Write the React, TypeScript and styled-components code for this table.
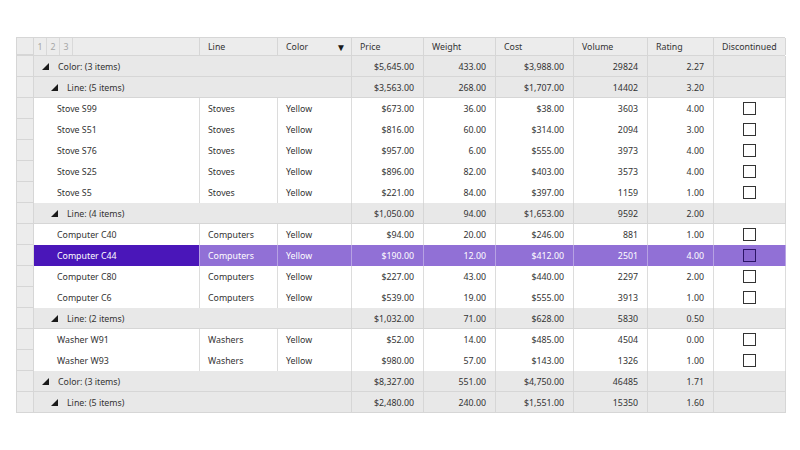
import React from "react";
import styled, { createGlobalStyle } from "styled-components";

type Item = {
  name: string;
  line: string;
  price: string;
  weight: string;
  cost: string;
  volume: string;
  rating: string;
  selected?: boolean;
};

type Agg = {
  price: string;
  weight: string;
  cost: string;
  volume: string;
  rating: string;
};

type Row =
  | { kind: "group"; level: 1 | 2; label: string; agg: Agg }
  | { kind: "item"; item: Item };

const agg = (price: string, weight: string, cost: string, volume: string, rating: string): Agg => ({
  price,
  weight,
  cost,
  volume,
  rating,
});

const item = (
  name: string,
  line: string,
  price: string,
  weight: string,
  cost: string,
  volume: string,
  rating: string,
  selected = false
): Row => ({ kind: "item", item: { name, line, price, weight, cost, volume, rating, selected } });

const rows: Row[] = [
  { kind: "group", level: 1, label: "Color: (3 items)", agg: agg("$5,645.00", "433.00", "$3,988.00", "29824", "2.27") },
  { kind: "group", level: 2, label: "Line: (5 items)", agg: agg("$3,563.00", "268.00", "$1,707.00", "14402", "3.20") },
  item("Stove S99", "Stoves", "$673.00", "36.00", "$38.00", "3603", "4.00"),
  item("Stove S51", "Stoves", "$816.00", "60.00", "$314.00", "2094", "3.00"),
  item("Stove S76", "Stoves", "$957.00", "6.00", "$555.00", "3973", "4.00"),
  item("Stove S25", "Stoves", "$896.00", "82.00", "$403.00", "3573", "4.00"),
  item("Stove S5", "Stoves", "$221.00", "84.00", "$397.00", "1159", "1.00"),
  { kind: "group", level: 2, label: "Line: (4 items)", agg: agg("$1,050.00", "94.00", "$1,653.00", "9592", "2.00") },
  item("Computer C40", "Computers", "$94.00", "20.00", "$246.00", "881", "1.00"),
  item("Computer C44", "Computers", "$190.00", "12.00", "$412.00", "2501", "4.00", true),
  item("Computer C80", "Computers", "$227.00", "43.00", "$440.00", "2297", "2.00"),
  item("Computer C6", "Computers", "$539.00", "19.00", "$555.00", "3913", "1.00"),
  { kind: "group", level: 2, label: "Line: (2 items)", agg: agg("$1,032.00", "71.00", "$628.00", "5830", "0.50") },
  item("Washer W91", "Washers", "$52.00", "14.00", "$485.00", "4504", "0.00"),
  item("Washer W93", "Washers", "$980.00", "57.00", "$143.00", "1326", "1.00"),
  { kind: "group", level: 1, label: "Color: (3 items)", agg: agg("$8,327.00", "551.00", "$4,750.00", "46485", "1.71") },
  { kind: "group", level: 2, label: "Line: (5 items)", agg: agg("$2,480.00", "240.00", "$1,551.00", "15350", "1.60") },
];

const GlobalStyle = createGlobalStyle`
  html, body {
    margin: 0;
    padding: 0;
    background: #ffffff;
  }
  body {
    font-family: "Noto Sans", "Open Sans", sans-serif;
    font-size: 8.8px;
    color: #333333;
  }
`;

const COLUMNS = "17px 166px 78px 74px 72px 72px 78px 74px 66px 72px";

const Page = styled.div`
  width: 800px;
  height: 450px;
  padding: 37px 0 0 16px;
  box-sizing: border-box;
`;

const Grid = styled.div`
  width: 769px;
  border-left: 1px solid #d6d6d6;
  border-top: 1px solid #d6d6d6;
  box-sizing: border-box;
`;

const HeaderRow = styled.div`
  display: grid;
  grid-template-columns: ${COLUMNS};
  height: 17px;
  background: #ececec;
  border-bottom: 1px solid #d6d6d6;
`;

const HeaderCell = styled.div`
  display: flex;
  align-items: center;
  justify-content: space-between;
  padding: 0 5px 0 8px;
  border-right: 1px solid #d6d6d6;
  box-sizing: border-box;
  white-space: nowrap;
`;

const GroupLevels = styled.div`
  display: flex;
  height: 100%;
`;

const LevelBox = styled.div`
  width: 13px;
  display: flex;
  align-items: center;
  justify-content: center;
  color: #a6a6a6;
  border-right: 1px solid #d9d9d9;
  box-sizing: border-box;
`;

const NameHeader = styled.div`
  border-right: 1px solid #d6d6d6;
`;

const SortGlyph = styled.span`
  font-size: 10px;
  color: #1a1a1a;
`;

const BodyRow = styled.div<{ $group?: boolean }>`
  display: grid;
  grid-template-columns: ${COLUMNS};
  height: 21px;
  background: ${(p) => (p.$group ? "#e8e8e8" : "#ffffff")};
  box-shadow: ${(p) => (p.$group ? "inset 0 -1px 0 #d6d6d6" : "none")};
`;

const RowHeader = styled.div`
  background: #ececec;
  border-right: 1px solid #d6d6d6;
  border-bottom: 1px solid #d6d6d6;
  box-sizing: border-box;
`;

const GroupLabel = styled.div<{ $level: number }>`
  grid-column: span 3;
  display: flex;
  align-items: center;
  gap: 9px;
  padding-left: ${(p) => (p.$level === 1 ? 8 : 17)}px;
  border-right: 1px solid #d6d6d6;
  box-sizing: border-box;
  white-space: nowrap;
`;

const Cell = styled.div<{ $align?: "left" | "right" | "center"; $tone?: "dark" | "light" }>`
  display: flex;
  align-items: center;
  justify-content: ${(p) =>
    p.$align === "right" ? "flex-end" : p.$align === "center" ? "center" : "flex-start"};
  padding: 0 ${(p) => (p.$align === "right" ? 9 : 8)}px;
  border-right: 1px solid ${(p) => (p.$tone ? "#b7a2e3" : "#dcdcdc")};
  box-sizing: border-box;
  white-space: nowrap;
  background: ${(p) => (p.$tone === "dark" ? "#4a16b9" : p.$tone === "light" ? "#9170d6" : "transparent")};
  color: ${(p) => (p.$tone ? "#ffffff" : "inherit")};
`;

const NameCell = styled(Cell)`
  padding-left: 23px;
`;

const AggCell = styled(Cell)`
  border-right-color: #d6d6d6;
`;

const CheckBox = styled.span<{ $selected?: boolean }>`
  width: 11px;
  height: 11px;
  border: 1px solid ${(p) => (p.$selected ? "#2c1466" : "#333333")};
  background: ${(p) => (p.$selected ? "#8a66d0" : "#ffffff")};
`;

function Expander() {
  return (
    <svg width="7" height="7" viewBox="0 0 7 7">
      <polygon points="7,0 7,7 0,7" fill="#1a1a1a" />
    </svg>
  );
}

function GroupRow({ level, label, agg }: { level: number; label: string; agg: Agg }) {
  return (
    <BodyRow $group>
      <RowHeader />
      <GroupLabel $level={level}>
        <Expander />
        {label}
      </GroupLabel>
      <AggCell $align="right">{agg.price}</AggCell>
      <AggCell $align="right">{agg.weight}</AggCell>
      <AggCell $align="right">{agg.cost}</AggCell>
      <AggCell $align="right">{agg.volume}</AggCell>
      <AggCell $align="right">{agg.rating}</AggCell>
      <AggCell />
    </BodyRow>
  );
}

function ItemRow({ item }: { item: Item }) {
  const tone = item.selected ? "light" : undefined;
  return (
    <BodyRow>
      <RowHeader />
      <NameCell $tone={item.selected ? "dark" : undefined}>{item.name}</NameCell>
      <Cell $tone={tone}>{item.line}</Cell>
      <Cell $tone={tone}>Yellow</Cell>
      <Cell $align="right" $tone={tone}>{item.price}</Cell>
      <Cell $align="right" $tone={tone}>{item.weight}</Cell>
      <Cell $align="right" $tone={tone}>{item.cost}</Cell>
      <Cell $align="right" $tone={tone}>{item.volume}</Cell>
      <Cell $align="right" $tone={tone}>{item.rating}</Cell>
      <Cell $align="center" $tone={tone}>
        <CheckBox $selected={item.selected} />
      </Cell>
    </BodyRow>
  );
}

export default function App(): JSX.Element {
  return (
    <Page>
      <GlobalStyle />
      <Grid>
        <HeaderRow>
          <RowHeader />
          <NameHeader>
            <GroupLevels>
              <LevelBox>1</LevelBox>
              <LevelBox>2</LevelBox>
              <LevelBox>3</LevelBox>
            </GroupLevels>
          </NameHeader>
          <HeaderCell>Line</HeaderCell>
          <HeaderCell>
            Color
            <SortGlyph>▼</SortGlyph>
          </HeaderCell>
          <HeaderCell>Price</HeaderCell>
          <HeaderCell>Weight</HeaderCell>
          <HeaderCell>Cost</HeaderCell>
          <HeaderCell>Volume</HeaderCell>
          <HeaderCell>Rating</HeaderCell>
          <HeaderCell>Discontinued</HeaderCell>
        </HeaderRow>
        {rows.map((row, i) =>
          row.kind === "group" ? (
            <GroupRow key={i} level={row.level} label={row.label} agg={row.agg} />
          ) : (
            <ItemRow key={i} item={row.item} />
          )
        )}
      </Grid>
    </Page>
  );
}
